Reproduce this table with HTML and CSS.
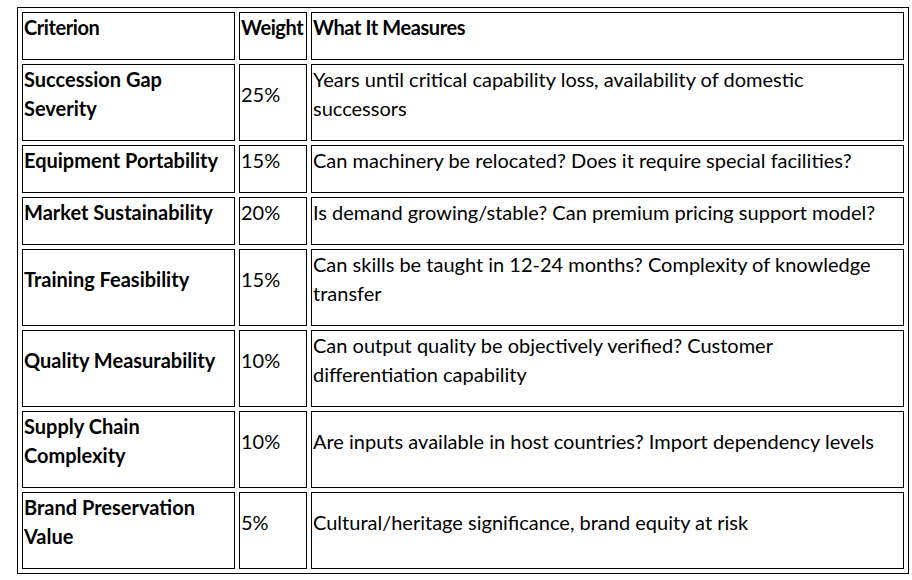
FILE: index.html
```html
<!DOCTYPE html>
<html lang="en">
<head>
<meta charset="utf-8">
<title>Criteria</title>
<link rel="stylesheet" href="styles.css">
</head>
<body>
<table class="criteria">
  <colgroup>
    <col class="c1">
    <col class="c2">
    <col class="c3">
  </colgroup>
  <tr>
    <th><p>Criterion</p></th>
    <th><p>Weight</p></th>
    <th><p>What It Measures</p></th>
  </tr>
  <tr>
    <td class="name"><p>Succession Gap Severity</p></td>
    <td><p>25%</p></td>
    <td class="desc"><p>Years until critical capability loss, availability of domestic successors</p></td>
  </tr>
  <tr>
    <td class="name"><p>Equipment Portability</p></td>
    <td><p>15%</p></td>
    <td class="desc"><p>Can machinery be relocated? Does it require special facilities?</p></td>
  </tr>
  <tr>
    <td class="name"><p>Market Sustainability</p></td>
    <td><p>20%</p></td>
    <td class="desc"><p>Is demand growing/stable? Can premium pricing support model?</p></td>
  </tr>
  <tr>
    <td class="name"><p>Training Feasibility</p></td>
    <td><p>15%</p></td>
    <td class="desc"><p>Can skills be taught in 12-24 months? Complexity of knowledge transfer</p></td>
  </tr>
  <tr>
    <td class="name"><p>Quality Measurability</p></td>
    <td><p>10%</p></td>
    <td class="desc"><p>Can output quality be objectively verified? Customer differentiation capability</p></td>
  </tr>
  <tr>
    <td class="name"><p>Supply Chain Complexity</p></td>
    <td><p>10%</p></td>
    <td class="desc"><p>Are inputs available in host countries? Import dependency levels</p></td>
  </tr>
  <tr>
    <td class="name"><p>Brand Preservation Value</p></td>
    <td><p>5%</p></td>
    <td class="desc"><p>Cultural/heritage significance, brand equity at risk</p></td>
  </tr>
</table>
</body>
</html>
```

FILE: styles.css
```css
html, body {
  margin: 0;
  padding: 0;
  background: #ffffff;
}

body {
  font-family: Lato, "Open Sans", sans-serif;
  font-size: 20px;
  color: #000000;
}

.criteria {
  margin: 7px 0 0 17px;
  width: 892px;
  table-layout: fixed;
  border: 1px solid #000;
  border-collapse: separate;
  border-spacing: 4px;
}

.c1 { width: 213px; }
.c2 { width: 68px; }
.c3 { width: 593px; }

.criteria th,
.criteria td {
  border: 1px solid #000;
  padding: 0 1px;
  text-align: left;
  vertical-align: middle;
}

.criteria th {
  vertical-align: top;
  letter-spacing: -0.4px;
}

.criteria td.name {
  padding-right: 7px;
}

.criteria td.desc {
  padding-right: 12px;
}

.criteria p {
  margin: 0 0 17px 0;
  line-height: 29px;
}

.criteria th,
.criteria td.name {
  font-weight: bold;
  font-size: 20px;
}
```
